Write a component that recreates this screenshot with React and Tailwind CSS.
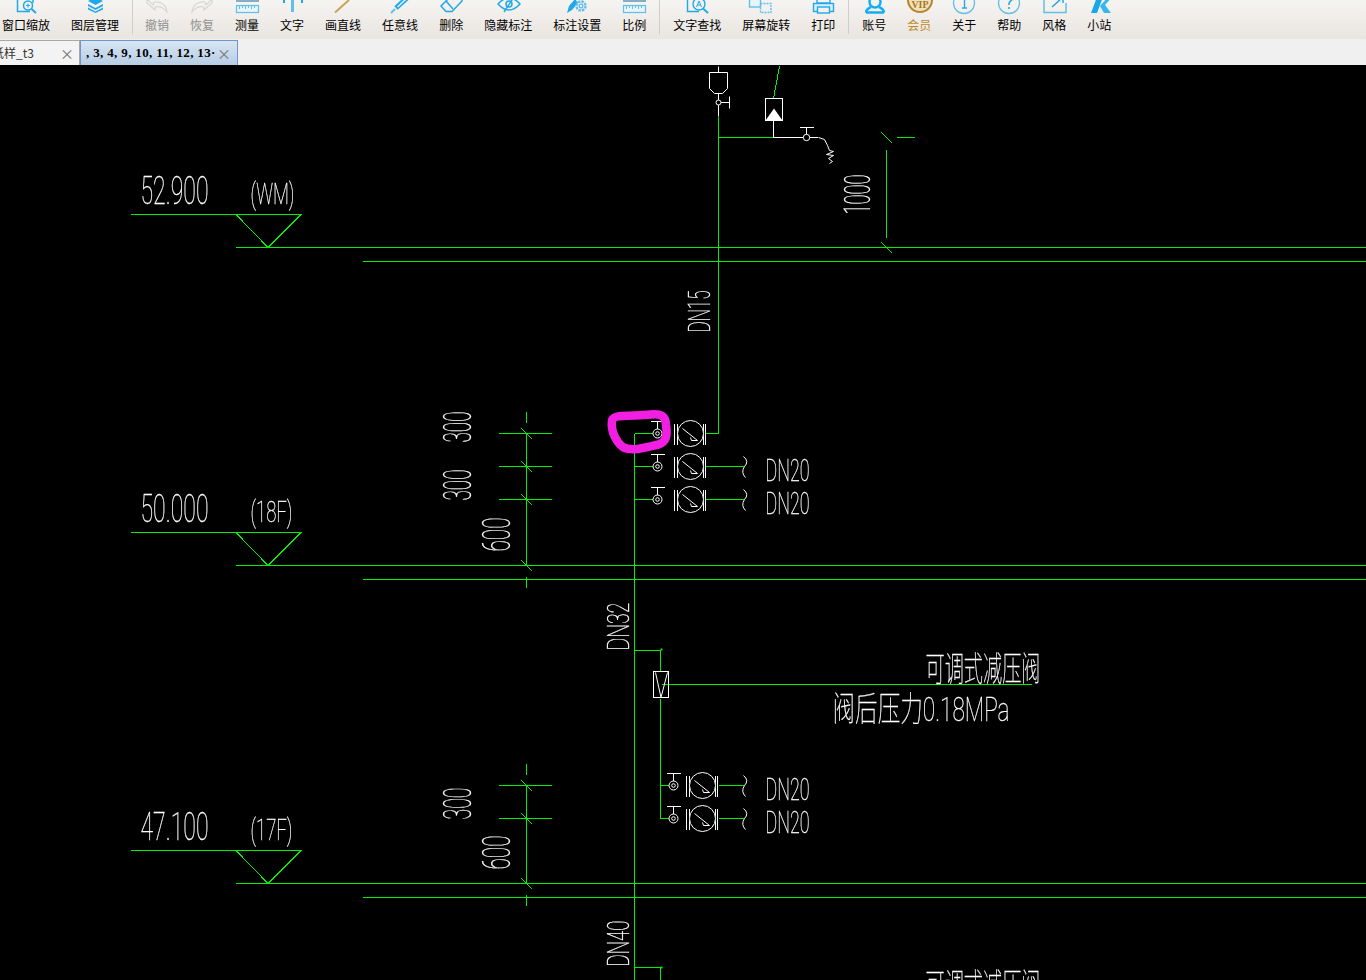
import React from "react";

const B = "#22a8ea";
const L = "#62bfec";

const icons = {
  zoom: (<g fill="none" stroke={B} strokeWidth="1.5"><path d="M4.5 -3V11.5H17" /><path d="M20 -3V3" /><circle cx="15" cy="5.5" r="4.5" fill="#f3f1ee" /><path d="M18.5 9L23 13" strokeWidth="2" /><path d="M13 5.5H17M15 3.5V7.5" strokeWidth="1" /></g>),
  layers: (<g fill={B}><path d="M6 1L13.5 -3L21 1L13.5 5Z" /><path d="M6 4L13.5 8L21 4V6L13.5 10L6 6Z" /><path d="M6 7.5L13.5 11.5L21 7.5V9.5L13.5 13L6 9.5Z" /></g>),
  undo: (<path d="M3 -1L9 5L10 2C16 1 22 4 23 12C19 7 15 6 11 7L11 10L3 3Z" fill="none" stroke="#d6d6d6" strokeWidth="1.2" />),
  redo: (<path d="M23 -1L17 5L16 2C10 1 4 4 3 12C7 7 11 6 15 7L15 10L23 3Z" fill="none" stroke="#d6d6d6" strokeWidth="1.2" />),
  ruler: (<g fill="none" stroke={L} strokeWidth="1.2"><path d="M2 1H25" stroke="#3f7fa8" /><rect x="2.5" y="5.5" width="22" height="7" fill="#e6f4fb" /><path d="M5.5 5.5V9M8.5 5.5V8M11.5 5.5V9M14.5 5.5V8M17.5 5.5V9M20.5 5.5V8" strokeWidth="1" /></g>),
  text: (<g><rect x="12" y="-2" width="3" height="14" fill={L} /><path d="M5 0V3M23 0V3" stroke={B} strokeWidth="2" /></g>),
  line: (<path d="M5 12.5L19 0" stroke="#c9a35a" strokeWidth="2" fill="none" />),
  pen: (<g fill="none"><path d="M9 8L20 -2" stroke={B} strokeWidth="5" /><path d="M4 13L8 9" stroke={L} strokeWidth="2" /><path d="M10.5 7L19 -1" stroke="#dff2fc" strokeWidth="1.5" /></g>),
  eraser: (<g fill="none" stroke={B} strokeWidth="1.5"><path d="M3 6L13 -4H24V1L14 11.5H8Z" fill="#f3f1ee" /><path d="M8 1L15 9" /></g>),
  eye: (<g fill="none" stroke={B} strokeWidth="1.5"><path d="M3 4Q14 -8 25 4Q14 16 3 4Z" /><circle cx="14" cy="4" r="3" /><path d="M9 12L19 -3" /></g>),
  gear: (<g><path d="M3 13L5 6L11 -1L14 3L8 10Z" fill={B} /><circle cx="17" cy="6" r="4.5" fill="none" stroke={L} strokeWidth="2.5" strokeDasharray="2.5 1" /><circle cx="17" cy="6" r="2" fill="none" stroke={B} strokeWidth="1" /></g>),
  find: (<g fill="none" stroke={B} strokeWidth="1.4"><path d="M3.5 -3V11.5H15" /><circle cx="15" cy="4" r="6" fill="#f3f1ee" /><path d="M19 8.5L24 13" strokeWidth="2" /><path d="M12.5 7L15 1L17.5 7M13.5 5H16.5" strokeWidth="1" /></g>),
  rotate: (<g fill="none" stroke={L} strokeWidth="1.4"><rect x="-3.5" y="-3" width="11" height="10" fill="#e6f4fb" /><rect x="7.5" y="3.5" width="10.5" height="9" strokeDasharray="2 1" /></g>),
  print: (<g fill="none" stroke={B} strokeWidth="1.4"><rect x="3.5" y="3.5" width="20" height="8" fill="#d8effa" /><rect x="7" y="-2" width="13" height="5" /><rect x="7.5" y="7" width="12" height="6" fill="#f3f1ee" /></g>),
  user: (<g fill="none" stroke="#14adf5" strokeWidth="2.4"><circle cx="14" cy="2" r="5.5" /><path d="M5 12.5C5 9 8 8 10 7M23 12.5C23 9 20 8 18 7M5 12.5H23" /></g>),
  vip: (<g><circle cx="14" cy="0" r="12" fill="#f0e2bf" stroke="#b5862f" strokeWidth="2" /><text x="14" y="8" textAnchor="middle" fontSize="10" fontWeight="700" fill="#a87622" className="font-['Liberation_Serif']">VIP</text></g>),
  about: (<g fill="none" stroke={L} strokeWidth="1.3"><circle cx="13" cy="3" r="10.5" /><path d="M11 -1L13.5 -2V8M11 8H16" stroke={B} /></g>),
  help: (<g fill="none" stroke={L} strokeWidth="1.3"><circle cx="13" cy="3" r="10.5" /><path d="M10 -1C10 -4 16 -4 16 -1C16 1 13 1 13 4V5M13 7V9" stroke={B} strokeWidth="1.6" /></g>),
  style: (<g fill="none" stroke={L} strokeWidth="1.5"><path d="M13 -2H3V12.5H25V3" /><path d="M11 7L21 -2M16 -3H22V3" stroke={B} /></g>),
  k: (<g fill="#19a7ea"><path d="M5 13L11 -3H17L11 13Z" /><path d="M18 13L14 6L22 -3H26L19 5L25 13Z" fill="#35b8f0" /></g>),
};

const items = [
  { t: "窗口缩放", i: "zoom" }, { t: "图层管理", i: "layers" }, "sep1",
  { t: "撤销", i: "undo", off: true }, { t: "恢复", i: "redo", off: true }, { t: "测量", i: "ruler" }, { t: "文字", i: "text" },
  { t: "画直线", i: "line" }, { t: "任意线", i: "pen" }, { t: "删除", i: "eraser" }, { t: "隐藏标注", i: "eye" },
  { t: "标注设置", i: "gear" }, { t: "比例", i: "ruler" }, "sep",
  { t: "文字查找", i: "find" }, { t: "屏幕旋转", i: "rotate" }, { t: "打印", i: "print" }, "sep",
  { t: "账号", i: "user" }, { t: "会员", i: "vip", gold: true }, { t: "关于", i: "about" }, { t: "帮助", i: "help" }, { t: "风格", i: "style" }, { t: "小站", i: "k" },
];

function Toolbar() {
  return (
    <div className="h-[39px] overflow-hidden flex items-start -ml-[8.5px] bg-gradient-to-b from-[#f6f4f1] to-[#e9e5e1] font-['Noto_Sans_CJK_SC','Liberation_Sans',sans-serif] text-xs">
      {items.map((it, n) =>
        it === "sep1" ? (
          <div key={n} className="w-px h-[34px] mx-[2px] bg-[#cfcdca] shrink-0" />
        ) : it === "sep" ? (
          <div key={n} className="w-px h-[34px] mx-[2.5px] bg-[#cfcdca] shrink-0" />
        ) : (
          <div key={n} className="flex flex-col items-center px-[10.5px] shrink-0">
            <svg width="26" height="14" viewBox="0 0 26 14" className="overflow-visible -mx-[1px]">{icons[it.i]}</svg>
            <span className={"mt-[4px] leading-[14px] whitespace-nowrap " + (it.off ? "text-[#909090]" : it.gold ? "text-[#c08a2a]" : "text-black")}>{it.t}</span>
          </div>
        )
      )}
    </div>
  );
}

function Tabs() {
  return (
    <div className="h-[26px] bg-[#f0f0f0] flex items-end overflow-hidden font-['Noto_Sans_CJK_SC','Liberation_Sans',sans-serif] text-xs">
      <div className="w-[80px] h-[25px] shrink-0 border border-[#a8a8a8] border-l-0 border-b-0 bg-[#f3f3f3] flex items-center justify-between pr-[5px] text-[#333] overflow-hidden">
        <span className="whitespace-nowrap -ml-[8px]">纸样_t3</span>
        <span className="text-[#777] text-sm leading-none">×</span>
      </div>
      <div className="w-[158px] h-[25px] shrink-0 border border-[#6f97c8] border-b-0 bg-gradient-to-b from-[#d8e5f3] to-[#b7cde5] flex items-center justify-between pl-[5px] pr-[6px]">
        <span className="whitespace-nowrap font-['Liberation_Serif',serif] font-bold text-black text-[13px] tracking-[0.35px]">, 3, 4, 9, 10, 11, 12, 13·</span>
        <span className="text-[#777] text-sm leading-none">×</span>
      </div>
    </div>
  );
}

const G = "#00f000";

function Valve({ x, y, tail, lower }) {
  const s = lower ? -4 : 0;
  const c = x + 33 + s;
  return (
    <g>
      <path d={`M${x} ${y}V${y - 12}M${x - 7} ${y - 12}H${x + 7}M${x + 17 + s} ${y - 10}V${y + 11}M${x + 20 + s} ${y - 10}V${y + 11}M${x + 46 + s} ${y - 10}V${y + 11}M${x + 48 + s} ${y - 10}V${y + 11}`} stroke="#fff" fill="none" shapeRendering="crispEdges" />
      <circle cx={x} cy={y} r="4.5" fill="#000" stroke="#fff" />
      <circle cx={x} cy={y} r="1.8" fill="none" stroke="#fff" />
      <circle cx={c} cy={y} r="13" fill="#000" stroke="#fff" />
      <path d={`M${c - 8} ${y - 5}L${c + 7} ${y + 7}L${c + 1} ${y + 7}L${c} ${y + 4}`} fill="none" stroke="#fff" />
      {tail && <path d={`M${x + 48} ${y}H${x + 86}`} stroke={G} shapeRendering="crispEdges" />}
      {tail && <path d={`M${x + 86} ${y - 10}Q${x + 92} ${y - 5} ${x + 87} ${y}Q${x + 83} ${y + 6} ${x + 88} ${y + 11}`} stroke="#fff" fill="none" />}
    </g>
  );
}

function T({ x, y, s, w, children, rot }) {
  const px = x - 1;
  const py = y - 1;
  return (
    <text x={px} y={py} fontSize={s} textLength={w} lengthAdjust="spacingAndGlyphs" transform={rot ? `rotate(-90 ${px} ${py})` : undefined} fill="#fff" stroke="#fff" strokeWidth="0.3" className="grayscale">{children}</text>
  );
}

function Level({ y, num, tag }) {
  return (
    <g>
      <path d={`M130 ${y}H301M235 ${y + 33}H1366M362 ${y + 47}H1366`} stroke={G} shapeRendering="crispEdges" />
      <path d={`M235.5 ${y}L267.5 ${y + 33}L300.5 ${y}`} stroke={G} fill="none" shapeRendering="crispEdges" />
      <T x={141} y={y - 10} s={39} w={68}>{num}</T>
      <T x={251} y={y - 10} s={30} w={tag === "(WM)" ? 44 : 42}>{tag}</T>
    </g>
  );
}

function Dim({ ys, x1 = 498, x2 = 551 }) {
  const top = ys[0], bot = ys[ys.length - 1];
  let d = `M526 ${top - 22}V${top - 11}M526 ${top}V${bot}M526 ${bot + 11}V${bot + 22}`;
  let ticks = "";
  ys.forEach((y, i) => {
    if (i < ys.length - 1) d += `M${x1} ${y}H${x2}`;
    ticks += `M521 ${y - 5}L532 ${y + 6}`;
  });
  return <path d={d + ticks} stroke={G} fill="none" shapeRendering="crispEdges" />;
}

function Cad() {
  return (
    <svg width="1366" height="915" viewBox="0 65 1366 915" className="block bg-black font-['Roboto','Noto_Sans_CJK_SC',sans-serif] font-thin">
      <g transform="translate(0.5 0.5)">
        <Level y={214} num="52.900" tag="(WM)" />
        <Level y={532} num="50.000" tag="(18F)" />
        <Level y={850} num="47.100" tag="(17F)" />

        <path d="M718 116V433H705M634 433V980M634 433H653M634 466H653M634 499H653M718 137H773" stroke={G} fill="none" shapeRendering="crispEdges" />
        <path d="M779 66L773 98" stroke={G} shapeRendering="crispEdges" />
        <path d="M881 132L892 143M896 137H914M886 149V237M881 242L892 253" stroke={G} fill="none" shapeRendering="crispEdges" />

        <path d="M718 66V72M718 93V116M709 72H727V88L722 93H714L709 88ZM718 102H729M729 96V108" stroke="#fff" fill="none" />
        <circle cx="718" cy="102" r="2.5" fill="#000" stroke="#fff" />
        <rect x="765" y="98" width="17" height="22" fill="none" stroke="#fff" />
        <path d="M773.5 108L765 120H782Z" fill="#fff" />
        <path d="M773 120V137H817M806 137V127M799 126.5H813" stroke="#fff" fill="none" shapeRendering="crispEdges" />
        <circle cx="806" cy="137" r="3.2" fill="#000" stroke="#fff" />
        <path d="M818 137L824 139L827 145L829 150L833 151L826 154L833 155L828 158L832 161L829 163" stroke="#fff" fill="none" />

        <T x={870} y={215} s={37} w={40} rot>1000</T>
        <T x={710} y={333} s={32} w={42} rot>DN15</T>
        <T x={629} y={651} s={32} w={48} rot>DN32</T>
        <T x={629} y={967} s={32} w={46} rot>DN40</T>

        <Dim ys={[433, 466, 499, 565]} />
        <Dim ys={[785, 818, 883]} />
        <T x={471} y={443} s={39} w={31} rot>300</T>
        <T x={471} y={501} s={39} w={31} rot>300</T>
        <T x={510} y={552} s={39} w={34} rot>600</T>
        <T x={471} y={820} s={39} w={32} rot>300</T>
        <T x={510} y={870} s={39} w={34} rot>600</T>

        <Valve x={657} y={433} />
        <Valve x={657} y={466} tail />
        <Valve x={657} y={499} tail />
        <T x={766} y={481} s={32} w={44}>DN20</T>
        <T x={766} y={514} s={32} w={44}>DN20</T>

        <path d="M634 650H660V671M660 698V818H669M660 785H669M661 684H1031" stroke={G} fill="none" shapeRendering="crispEdges" />
        <rect x="660" y="648" width="2" height="2" fill={G} />
        <rect x="653" y="671" width="15" height="26" fill="none" stroke="#fff" />
        <path d="M655 672L660.5 697L667 672" fill="none" stroke="#fff" />
        <Valve x={673} y={785} lower />
        <Valve x={673} y={818} lower />
        <path d="M718 785H743M718 818H743" stroke={G} shapeRendering="crispEdges" />
        <path d="M743 775Q749 780 744 785Q740 791 745 796M743 808Q749 813 744 818Q740 824 745 829" stroke="#fff" fill="none" />
        <T x={766} y={800} s={32} w={44}>DN20</T>
        <T x={766} y={833} s={32} w={44}>DN20</T>

        <T x={926} y={681} s={34} w={115}>可调式减压阀</T>
        <T x={833} y={721} s={34} w={177}>阀后压力0.18MPa</T>

        <path d="M634 967H660V980" stroke={G} fill="none" shapeRendering="crispEdges" />
        <rect x="660" y="966" width="2" height="2" fill={G} />
        <T x={926} y={998} s={34} w={115}>可调式减压阀</T>

        <path d="M611.5 420C613 413 635 416 650 414C660 413 665 415 665.5 424C667 436 666 441 658 444C645 447 632 451 623 447C616 442 610 431 611.5 420Z" fill="none" stroke="#f21fe2" strokeWidth="8.5" strokeLinejoin="round" />
      </g>
    </svg>
  );
}

export default function App() {
  return (
    <div className="w-[1366px] h-[980px] overflow-hidden bg-black">
      <Toolbar />
      <Tabs />
      <Cad />
    </div>
  );
}
